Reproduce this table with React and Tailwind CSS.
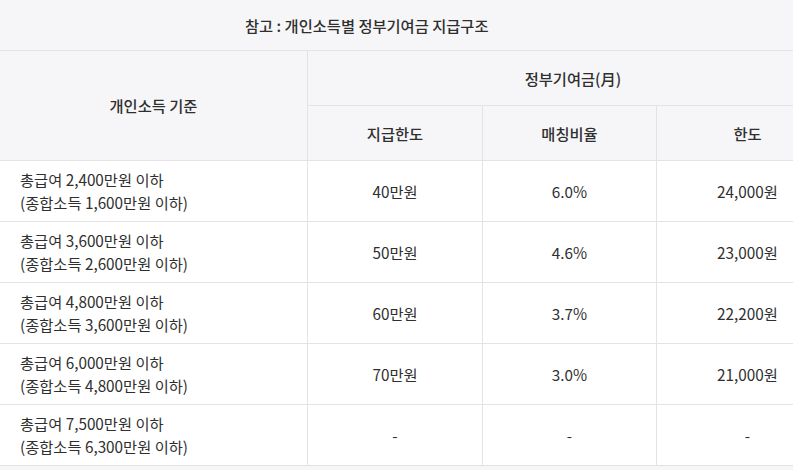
import React from "react";

const rows = [
  ["총급여 2,400만원 이하", "(종합소득 1,600만원 이하)", "40만원", "6.0%", "24,000원"],
  ["총급여 3,600만원 이하", "(종합소득 2,600만원 이하)", "50만원", "4.6%", "23,000원"],
  ["총급여 4,800만원 이하", "(종합소득 3,600만원 이하)", "60만원", "3.7%", "22,200원"],
  ["총급여 6,000만원 이하", "(종합소득 4,800만원 이하)", "70만원", "3.0%", "21,000원"],
  ["총급여 7,500만원 이하", "(종합소득 6,300만원 이하)", "-", "-", "-"],
];

export default function App() {
  return (
    <div
      className="w-[793px] h-[470px] overflow-hidden bg-[#f6f6f8] text-[#2f2f2f] text-[15.3px]"
      style={{ fontFamily: '"Noto Sans CJK KR", "Noto Sans", sans-serif' }}
    >
      <div className="w-[838px]">
        <div className="h-[51px] border-b border-[#e3e3e5] flex items-center pl-[245px] font-medium">
          참고 : 개인소득별 정부기여금 지급구조
        </div>
        <div className="grid grid-cols-[308px_175px_174px_181px]">
          <div className="row-span-2 border-r border-b border-[#e3e3e5] flex items-center justify-center font-medium">
            개인소득 기준
          </div>
          <div className="col-span-3 h-[55px] border-b border-[#e3e3e5] flex items-center justify-center font-medium">
            정부기여금(月)
          </div>
          <div className="h-[55px] border-r border-b border-[#e3e3e5] flex items-center justify-center font-medium">
            지급한도
          </div>
          <div className="h-[55px] border-r border-b border-[#e3e3e5] flex items-center justify-center font-medium">
            매칭비율
          </div>
          <div className="h-[55px] border-b border-[#e3e3e5] flex items-center justify-center font-medium">
            한도
          </div>
          {rows.map((r, i) => (
            <React.Fragment key={i}>
              <div className="h-[61px] bg-white border-r border-b border-[#e3e3e5] flex flex-col justify-center pl-5 leading-[23px]">
                <span>{r[0]}</span>
                <span>{r[1]}</span>
              </div>
              <div className="h-[61px] bg-white border-r border-b border-[#e3e3e5] flex items-center justify-center">
                {r[2]}
              </div>
              <div className="h-[61px] bg-white border-r border-b border-[#e3e3e5] flex items-center justify-center">
                {r[3]}
              </div>
              <div className="h-[61px] bg-white border-b border-[#e3e3e5] flex items-center justify-center">
                {r[4]}
              </div>
            </React.Fragment>
          ))}
        </div>
      </div>
    </div>
  );
}
